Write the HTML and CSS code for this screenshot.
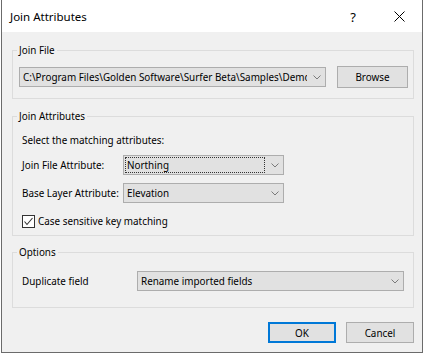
FILE: index.html
```html
<!DOCTYPE html>
<html>
<head>
<meta charset="utf-8">
<title>Join Attributes</title>
<link rel="stylesheet" href="styles.css">
</head>
<body>
<div class="window">
  <div class="titlebar">
    <span class="title">Join Attributes</span>
    <span class="cap-btn help">?</span>
    <span class="cap-btn close"><svg width="11" height="11" viewBox="0 0 11 11"><path d="M0.5 0.5 L10.5 10.5 M10.5 0.5 L0.5 10.5" stroke="#000" stroke-width="1" fill="none"/></svg></span>
  </div>
  <div class="content">
    <fieldset class="group g-file">
      <legend>Join File</legend>
      <div class="file-row">
        <div class="combo combo-file">
          <span class="combo-text">C:\Program Files\Golden Software\Surfer Beta\Samples\Demo</span>
          <span class="combo-arrow"><svg width="8" height="5" viewBox="0 0 8 5"><path d="M0.5 0.5 L4 4 L7.5 0.5" stroke="#7a7a7a" stroke-width="1" fill="none"/></svg></span>
        </div>
        <button class="btn btn-browse">Browse</button>
      </div>
    </fieldset>

    <fieldset class="group g-attr">
      <legend>Join Attributes</legend>
      <div class="attr-body">
        <div class="hint">Select the matching attributes:</div>
        <div class="form-row">
          <span class="row-label">Join File Attribute:</span>
          <div class="combo combo-attr">
            <span class="combo-text focused">Northing</span>
            <span class="combo-arrow"><svg width="8" height="5" viewBox="0 0 8 5"><path d="M0.5 0.5 L4 4 L7.5 0.5" stroke="#7a7a7a" stroke-width="1" fill="none"/></svg></span>
          </div>
        </div>
        <div class="form-row">
          <span class="row-label">Base Layer Attribute:</span>
          <div class="combo combo-attr">
            <span class="combo-text">Elevation</span>
            <span class="combo-arrow"><svg width="8" height="5" viewBox="0 0 8 5"><path d="M0.5 0.5 L4 4 L7.5 0.5" stroke="#7a7a7a" stroke-width="1" fill="none"/></svg></span>
          </div>
        </div>
        <label class="check-row">
          <span class="checkbox"><svg width="11" height="11" viewBox="0 0 11 11"><path d="M1.5 5.5 L4 8.5 L9.5 2" stroke="#333" stroke-width="1.1" fill="none"/></svg></span>
          <span>Case sensitive key matching</span>
        </label>
      </div>
    </fieldset>

    <fieldset class="group g-opt">
      <legend>Options</legend>
      <div class="opt-body">
        <div class="form-row">
          <span class="row-label wide">Duplicate field</span>
          <div class="combo combo-opt">
            <span class="combo-text">Rename imported fields</span>
            <span class="combo-arrow"><svg width="8" height="5" viewBox="0 0 8 5"><path d="M0.5 0.5 L4 4 L7.5 0.5" stroke="#7a7a7a" stroke-width="1" fill="none"/></svg></span>
          </div>
        </div>
      </div>
    </fieldset>

    <div class="actions">
      <button class="btn btn-ok">OK</button>
      <button class="btn btn-cancel">Cancel</button>
    </div>
  </div>
</div>
</body>
</html>
```

FILE: styles.css
```css
* { box-sizing: border-box; }

html, body {
  margin: 0;
  padding: 0;
  background: #ffffff;
}

body {
  font-family: "Noto Sans", "Open Sans", sans-serif;
  font-size: 9.9px;
  color: #000;
}

.window {
  margin-left: 1px;
  width: 422px;
  height: 353px;
  border-left: 1px solid #6b6b6b;
  border-right: 1px solid #6b6b6b;
  border-bottom: 1px solid #6b6b6b;
  display: flex;
  flex-direction: column;
}

.titlebar {
  height: 32px;
  background: #fff;
  display: flex;
  align-items: center;
}

.title {
  flex: 1;
  padding-left: 8px;
  font-size: 11.5px;
  line-height: 14px;
  padding-top: 1px;
}

.cap-btn {
  width: 46px;
  height: 32px;
  display: flex;
  align-items: center;
  justify-content: center;
}

.help {
  font-size: 13px;
  padding-top: 1px;
}

.close svg { display: block; }

.content {
  flex: 1;
  background: #f0f0f0;
  padding: 11px 8px 0 10px;
}

.group {
  margin: 0;
  padding: 0;
  border: 1px solid #dcdcdc;
  min-width: 0;
}

.group legend {
  margin-left: 4px;
  padding: 0 2px;
  line-height: 14px;
}

.g-attr { margin-top: 10px; }
.g-opt { margin-top: 9px; }

.file-row {
  display: flex;
  align-items: center;
  gap: 11px;
  padding: 9px 5px 10px 6px;
}

.combo {
  height: 20px;
  background: #e1e1e1;
  border: 1px solid #adadad;
  display: flex;
  align-items: stretch;
}

.combo-text {
  flex: 1;
  min-width: 0;
  margin: 1px;
  padding-left: 2px;
  white-space: nowrap;
  overflow: hidden;
  line-height: 16px;
}

.combo-text.focused {
  outline: 1px dotted #333;
  outline-offset: -1px;
}

.combo-arrow {
  width: 17px;
  display: flex;
  align-items: center;
  justify-content: center;
}

.combo-arrow svg { display: block; }

.combo-file { width: 307px; }

.btn {
  font-family: inherit;
  font-size: inherit;
  color: #000;
  background: #e1e1e1;
  border: 1px solid #adadad;
  border-radius: 0;
  padding: 0;
  margin: 0;
  height: 21px;
}

.btn-browse { width: 71px; height: 22px; }

.attr-body {
  padding: 10px 9px 7px 9px;
}

.hint {
  line-height: 14px;
  margin-bottom: 8px;
}

.form-row {
  display: flex;
  align-items: center;
  margin-bottom: 8px;
}

.row-label {
  width: 101px;
  line-height: 14px;
}

.row-label.wide { width: 115px; }

.combo-attr { width: 161px; }

.check-row {
  display: flex;
  align-items: center;
  gap: 3px;
  line-height: 14px;
  margin-top: 11px;
}

.checkbox {
  width: 13px;
  height: 13px;
  border: 1px solid #333;
  background: #fff;
  display: flex;
  align-items: center;
  justify-content: center;
}

.checkbox svg { display: block; }

.opt-body {
  padding: 12px 9px 16px 9px;
}

.opt-body .form-row { margin-bottom: 0; }

.combo-opt { width: 267px; }

.actions {
  display: flex;
  justify-content: flex-end;
  gap: 10px;
  margin-top: 14px;
}

.btn-ok, .btn-cancel { width: 68px; }

.btn-ok { border-color: #0078d7; box-shadow: inset 0 0 0 1px #0078d7; }
```
